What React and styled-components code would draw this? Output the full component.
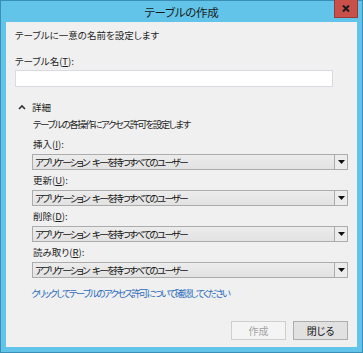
import React from "react";
import styled, { createGlobalStyle } from "styled-components";

const GlobalStyle = createGlobalStyle`
  html, body {
    margin: 0;
    padding: 0;
    width: 363px;
    height: 353px;
    overflow: hidden;
    background: #ffffff;
  }
  body {
    font-family: "Noto Sans CJK JP", "Noto Sans", sans-serif;
    font-feature-settings: "palt";
  }
  * { box-sizing: border-box; }
`;

const Window = styled.div`
  width: 363px;
  height: 353px;
  border: 1px solid #3a8fb8;
  background: #61c4e8;
  display: flex;
  flex-direction: column;
`;

const TitleBar = styled.div`
  position: relative;
  height: 21px;
  display: flex;
  align-items: center;
  justify-content: center;
  font-size: 11.5px;
  color: #1a1a1a;
  letter-spacing: -0.3px;
`;

const CloseButton = styled.div`
  position: absolute;
  top: -1px;
  right: 4px;
  width: 24px;
  height: 18px;
  background: #c8504b;
  border: 1px solid #9a3b37;
  border-top: none;
  display: flex;
  align-items: center;
  justify-content: center;
`;

const Body = styled.div`
  flex: 1;
  margin: 0 5px 5px 5px;
  background: #f0f0f0;
  padding: 6px 9px 7px 9px;
  display: flex;
  flex-direction: column;
  font-size: 9.5px;
  color: #1e1e1e;
`;

const Text = styled.div`
  line-height: 14px;
  height: 14px;
  white-space: nowrap;
  margin-top: ${(p) => p.$mt || 0}px;
  letter-spacing: ${(p) => p.$ls || 0}px;
`;

const TextInput = styled.div`
  margin-top: 2px;
  width: 318px;
  height: 17px;
  background: #ffffff;
  border: 1px solid #d8dce2;
`;

const DetailsHeader = styled.div`
  margin-top: 13px;
  display: flex;
  align-items: center;
  gap: 6px;
  height: 14px;
  line-height: 14px;
  padding-left: 3px;
`;

const Details = styled.div`
  padding-left: 18px;
  display: flex;
  flex-direction: column;
`;

const SelectBox = styled.div`
  margin-top: 3px;
  margin-left: -1px;
  width: 316px;
  height: 16px;
  border: 1px solid #acacac;
  background: linear-gradient(#ececec, #e2e2e2);
  display: flex;
  align-items: stretch;
`;

const SelectText = styled.div`
  flex: 1;
  padding-left: 2px;
  line-height: 14px;
  color: #111;
  white-space: nowrap;
  letter-spacing: -1.75px;
  word-spacing: 3px;
`;

const SelectArrow = styled.div`
  width: 13px;
  border-left: 1px solid #acacac;
  background: #ececec;
  display: flex;
  align-items: center;
  justify-content: center;
`;

const Group = styled.div`
  margin-top: ${(p) => p.$mt}px;
  display: flex;
  flex-direction: column;
`;

const Link = styled.div`
  margin-top: 8px;
  margin-left: -2px;
  line-height: 14px;
  color: #2a6cbd;
  white-space: nowrap;
  letter-spacing: -1.8px;
`;

const Footer = styled.div`
  margin-top: auto;
  display: flex;
  justify-content: flex-end;
  gap: 7px;
`;

const Button = styled.div`
  width: 55px;
  height: 19px;
  display: flex;
  align-items: center;
  justify-content: center;
  font-size: 10px;
  border: 1px solid ${(p) => (p.$disabled ? "#cfcfcf" : "#adadad")};
  background: ${(p) => (p.$disabled ? "#f4f4f4" : "#e1e1e1")};
  color: ${(p) => (p.$disabled ? "#a3a3a3" : "#111")};
`;

const U = styled.span`
  text-decoration: underline;
`;

const Chevron = () => (
  <svg width="8" height="6" viewBox="0 0 8 6">
    <polyline points="1,5 4,2 7,5" fill="none" stroke="#333" strokeWidth="1.6" />
  </svg>
);

const DownArrow = () => (
  <svg width="7" height="4" viewBox="0 0 7 4">
    <polygon points="0,0 7,0 3.5,4" fill="#111" />
  </svg>
);

const XGlyph = () => (
  <svg width="8" height="7" viewBox="0 0 8 7">
    <path d="M1 0.5 L7 6.5 M7 0.5 L1 6.5" stroke="#1a1a1a" strokeWidth="2" />
  </svg>
);

const perms = [
  { label: "挿入", key: "I" },
  { label: "更新", key: "U" },
  { label: "削除", key: "D" },
  { label: "読み取り", key: "R" },
];

export default function App() {
  return (
    <>
      <GlobalStyle />
      <Window>
        <TitleBar>
          テーブルの作成
          <CloseButton>
            <XGlyph />
          </CloseButton>
        </TitleBar>
        <Body>
          <Text>テーブルに一意の名前を設定します</Text>
          <Text $mt={12}>
            テーブル名(<U>T</U>):
          </Text>
          <TextInput />
          <DetailsHeader>
            <Chevron />
            <span>詳細</span>
          </DetailsHeader>
          <Details>
            <Text $mt={3} $ls={-1.5}>テーブルの各操作にアクセス許可を設定します</Text>
            {perms.map((p, i) => (
              <Group key={p.key} $mt={i === 0 ? 6 : 3}>
                <Text>
                  {p.label}(<U>{p.key}</U>):
                </Text>
                <SelectBox>
                  <SelectText>アプリケーション キーを持つすべてのユーザー</SelectText>
                  <SelectArrow>
                    <DownArrow />
                  </SelectArrow>
                </SelectBox>
              </Group>
            ))}
            <Link>クリックしてテーブルのアクセス許可について確認してください</Link>
          </Details>
          <Footer>
            <Button $disabled>作成</Button>
            <Button>閉じる</Button>
          </Footer>
        </Body>
      </Window>
    </>
  );
}
